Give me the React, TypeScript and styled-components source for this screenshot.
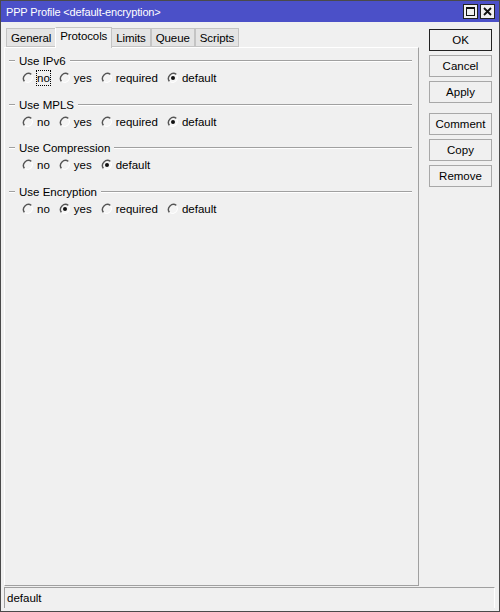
import React from "react";
import styled, { createGlobalStyle } from "styled-components";

const Global = createGlobalStyle`
  html, body { margin: 0; padding: 0; background: #f0f0f0; }
  body { font-family: Tahoma, "Liberation Sans", Arial, sans-serif; font-size: 11px; color: #000; }
`;

const Window = styled.div`
  width: 500px;
  height: 612px;
  box-sizing: border-box;
  border: 1px solid #4a4a4a;
  background: #f0f0f0;
  display: flex;
  flex-direction: column;
`;

const TitleBar = styled.div`
  height: 21px;
  background: #4b50c8;
  color: #fff;
  display: flex;
  align-items: center;
  padding: 0 4px 0 5px;
  font-size: 11px;
  letter-spacing: -0.15px;
`;

const Title = styled.div`
  flex: 1;
`;

const TitleBtn = styled.div`
  width: 13px;
  height: 13px;
  background: #f0f0f0;
  border: 1px solid #222;
  margin-left: 2px;
  display: flex;
  align-items: center;
  justify-content: center;
`;

const Body = styled.div`
  flex: 1;
  display: flex;
  padding: 4px 6px 0 3px;
  gap: 10px;
`;

const LeftCol = styled.div`
  width: 415px;
  display: flex;
  flex-direction: column;
`;

const TabStrip = styled.div`
  display: flex;
  align-items: flex-end;
  height: 21px;
  padding-left: 2px;
  position: relative;
  z-index: 1;
`;

const Tab = styled.div<{ $active?: boolean }>`
  height: ${(p) => (p.$active ? 21 : 19)}px;
  box-sizing: border-box;
  padding: ${(p) => (p.$active ? "2px 4px 0" : "1px 4px 0")};
  margin: ${(p) => (p.$active ? "0 -1px -1px" : "0")};
  background: ${(p) => (p.$active ? "#f0f0f0" : "#e4e4e4")};
  border: 1px solid #c4c4c4;
  border-bottom: ${(p) => (p.$active ? "none" : "1px solid #c4c4c4")};
  border-left-color: ${(p) => (p.$active ? "#fff" : "#c4c4c4")};
  display: flex;
  align-items: ${(p) => (p.$active ? "flex-start" : "center")};
  font-size: 11.5px;
  letter-spacing: -0.1px;
  position: relative;
  z-index: ${(p) => (p.$active ? 2 : 1)};
`;

const Panel = styled.div`
  flex: 1;
  box-sizing: border-box;
  border: 1px solid #a0a0a0;
  border-top-color: #fff;
  border-left-color: #fff;
  margin-bottom: 1px;
  padding: 5px 6px 0 4px;
`;

const Group = styled.div`
  height: 43.5px;
`;

const GroupHeader = styled.div`
  display: flex;
  align-items: center;
  gap: 4px;
  height: 16px;
  font-size: 11.5px;
`;

const Rule = styled.div<{ $w?: number }>`
  ${(p) => (p.$w ? `width: ${p.$w}px;` : "flex: 1;")}
  height: 0;
  border-top: 1px solid #a0a0a0;
  border-bottom: 1px solid #fff;
`;

const RadioRow = styled.div`
  display: flex;
  align-items: center;
  height: 18px;
  padding-left: 13px;
  gap: 8px;
`;

const Option = styled.div`
  display: flex;
  align-items: center;
  gap: 2px;
  font-size: 11.5px;
`;

const Label = styled.span<{ $focus?: boolean }>`
  padding: 1px 0;
  border: 1px ${(p) => (p.$focus ? "dotted #000" : "solid transparent")};
`;

const Buttons = styled.div`
  display: flex;
  flex-direction: column;
  gap: 4px;
  padding-top: 3px;
  width: 63px;
`;

const Btn = styled.div<{ $default?: boolean; $gapTop?: boolean }>`
  height: 22px;
  box-sizing: border-box;
  border: 1px solid ${(p) => (p.$default ? "#222" : "#a8a8a8")};
  background: #f0f0f0;
  display: flex;
  align-items: center;
  justify-content: center;
  font-size: 11.5px;
  margin-top: ${(p) => (p.$gapTop ? 6 : 0)}px;
`;

const StatusBar = styled.div`
  height: 21px;
  margin: 0 4px 3px 3px;
  box-sizing: border-box;
  border-top: 1px solid #a0a0a0;
  border-left: 1px solid #a0a0a0;
  border-right: 1px solid #fff;
  display: flex;
  align-items: center;
  padding-left: 2px;
  font-size: 11.5px;
`;

const Radio = ({ checked }: { checked?: boolean }) => (
  <svg width="12" height="12" viewBox="0 0 12 12">
    <circle cx="6" cy="6" r="5" fill="#f4f4f4" />
    <path d="M9.5 2.5 A5 5 0 0 0 2.5 9.5" fill="none" stroke="#555" strokeWidth="1.4" />
    <path d="M2.5 9.5 A5 5 0 0 0 9.5 2.5" fill="none" stroke="#fff" strokeWidth="1" />
    {checked && <circle cx="6" cy="6" r="2" fill="#111" />}
  </svg>
);

type G = { title: string; options: string[]; value: string; focus?: string };

const groups: G[] = [
  { title: "Use IPv6", options: ["no", "yes", "required", "default"], value: "default", focus: "no" },
  { title: "Use MPLS", options: ["no", "yes", "required", "default"], value: "default" },
  { title: "Use Compression", options: ["no", "yes", "default"], value: "default" },
  { title: "Use Encryption", options: ["no", "yes", "required", "default"], value: "yes" },
];

const tabs = ["General", "Protocols", "Limits", "Queue", "Scripts"];

export default function App() {
  return (
    <>
      <Global />
      <Window>
        <TitleBar>
          <Title>PPP Profile &lt;default-encryption&gt;</Title>
          <TitleBtn>
            <svg width="9" height="9" viewBox="0 0 9 9">
              <rect x="0.5" y="0.5" width="8" height="8" fill="none" stroke="#111" />
              <line x1="0" y1="1.5" x2="9" y2="1.5" stroke="#111" />
            </svg>
          </TitleBtn>
          <TitleBtn>
            <svg width="9" height="9" viewBox="0 0 9 9">
              <path d="M1 1 L8 8 M8 1 L1 8" stroke="#111" strokeWidth="1.8" />
            </svg>
          </TitleBtn>
        </TitleBar>
        <Body>
          <LeftCol>
            <TabStrip>
              {tabs.map((t) => (
                <Tab key={t} $active={t === "Protocols"}>
                  {t}
                </Tab>
              ))}
            </TabStrip>
            <Panel>
              {groups.map((g) => (
                <Group key={g.title}>
                  <GroupHeader>
                    <Rule $w={6} />
                    <span>{g.title}</span>
                    <Rule />
                  </GroupHeader>
                  <RadioRow>
                    {g.options.map((o) => (
                      <Option key={o}>
                        <Radio checked={o === g.value} />
                        <Label $focus={g.focus === o}>{o}</Label>
                      </Option>
                    ))}
                  </RadioRow>
                </Group>
              ))}
            </Panel>
          </LeftCol>
          <Buttons>
            <Btn $default>OK</Btn>
            <Btn>Cancel</Btn>
            <Btn>Apply</Btn>
            <Btn $gapTop>Comment</Btn>
            <Btn>Copy</Btn>
            <Btn>Remove</Btn>
          </Buttons>
        </Body>
        <StatusBar>default</StatusBar>
      </Window>
    </>
  );
}
